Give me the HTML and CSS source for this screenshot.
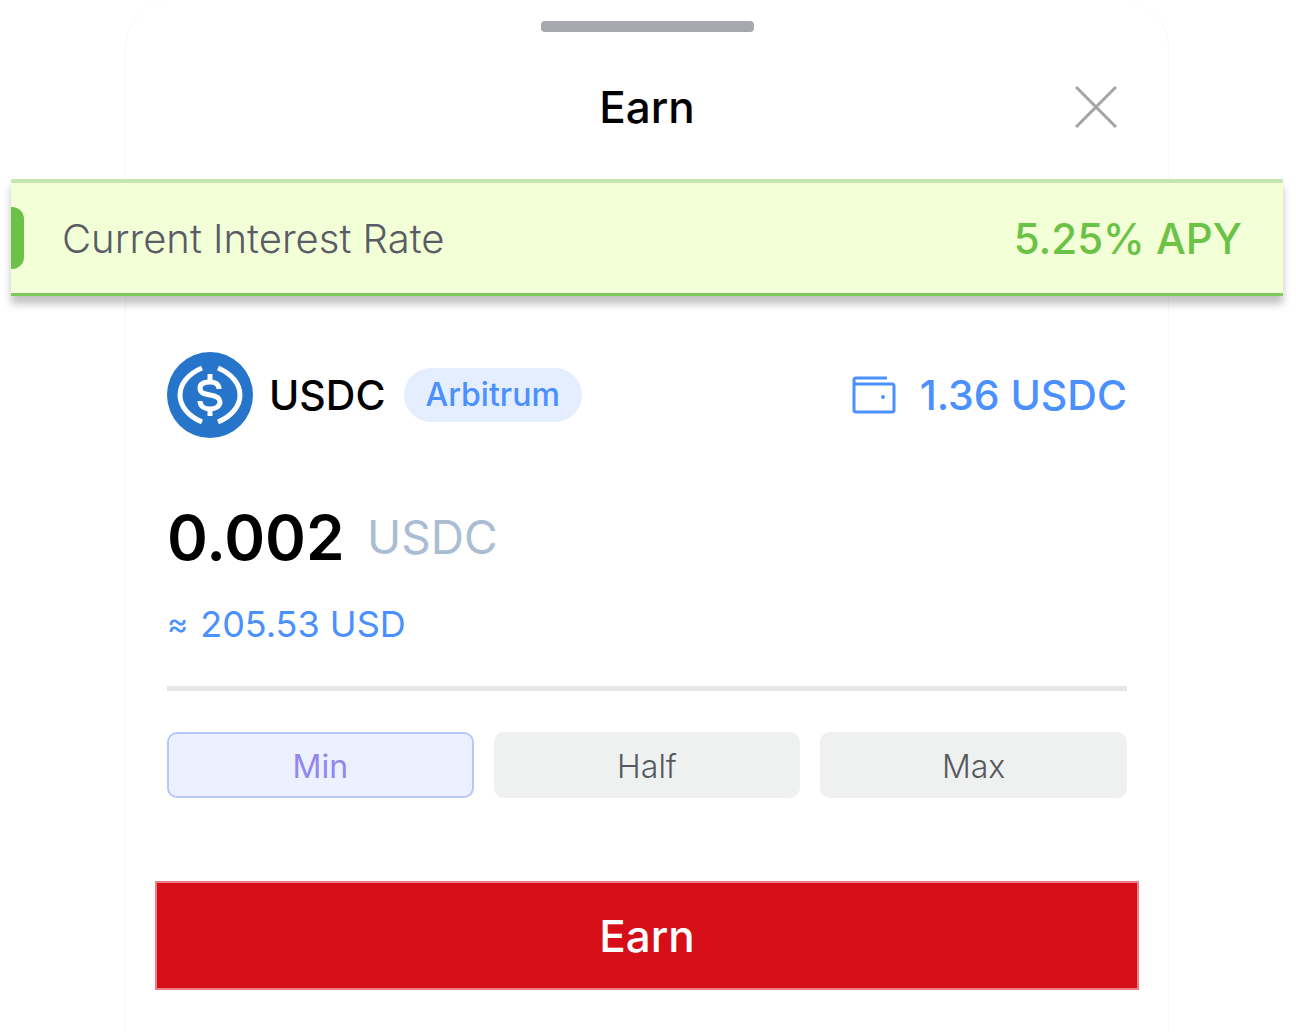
FILE: index.html
```html
<!DOCTYPE html>
<html lang="en">
<head>
    <meta charset="UTF-8">
    <meta name="viewport" content="width=device-width, initial-scale=1.0">
    <title>Earn</title>
    <link rel="stylesheet" href="styles.css">
</head>
<body>
    <main class="sheet">
        <div class="handle"></div>
        <header class="header">
            <h1>Earn</h1>
            <button type="button" class="close" aria-label="Close">
                <svg width="42" height="42" viewBox="0 0 42 42" fill="none" stroke="#a2a4a6" stroke-width="3">
                    <path d="M1 1L41 41M41 1L1 41"/>
                </svg>
            </button>
        </header>

        <section class="rate">
            <span class="rate-label">Current Interest Rate</span>
            <span class="rate-value">5.25% APY</span>
        </section>

        <div class="token">
            <svg class="coin" width="86" height="86" viewBox="0 0 86 86" fill="none">
                <circle cx="43" cy="43" r="43" fill="#2775ca"/>
                <g stroke="#fff" stroke-width="5">
                    <path d="M35 16C21 22 13 32 13 43S21 64 35 70"/>
                    <path d="M51 16C65 22 73 32 73 43S65 64 51 70"/>
                    <path d="M52 37C52 32 48 30 43 30C37 30 33 32 33 36C33 41 37 42 43 43C50 44 53 46 53 50C53 54 49 57 43 57C37 57 33 54 33 49"/>
                    <path d="M43 22V30M43 57V64"/>
                </g>
            </svg>
            <span class="token-name">USDC</span>
            <span class="network">Arbitrum</span>
            <span class="balance">
                <svg width="44" height="40" viewBox="0 0 44 40" fill="none" stroke="#4a90ff" stroke-width="3">
                    <path d="M35 3H4Q2 3 2 5V35Q2 37 4 37H40Q42 37 42 35V11Q42 9 40 9H4Q2 9 2 6"/>
                    <circle cx="31" cy="22" r="2" fill="#4a90ff" stroke="none"/>
                </svg>
                1.36 USDC
            </span>
        </div>

        <div class="amount">
            <input type="text" id="amount" inputmode="decimal" value="0.002">
            <label for="amount">USDC</label>
        </div>
        <div class="fiat"><span class="approx">≈</span>205.53 USD</div>
        <hr>
        <div class="presets">
            <button type="button" class="preset active">Min</button>
            <button type="button" class="preset">Half</button>
            <button type="button" class="preset">Max</button>
        </div>
        <button type="button" class="submit">Earn</button>
    </main>
</body>
</html>
```
FILE: styles.css
```css
* {
    box-sizing: border-box;
}
body {
    margin: 0;
    background-color: #fff;
    font-family: Inter, "Liberation Sans", sans-serif;
    color: #000;
}
button, input {
    font-family: inherit;
}
.sheet {
    min-height: 100vh;
    margin: 0 127px 0 125px;
    padding: 21px 41px 42px;
    border: 1px solid #f7f7f7;
    border-width: 0 1px;
    border-radius: 48px 48px 0 0;
}
.handle {
    width: 213px;
    height: 11px;
    margin: 0 auto;
    border-radius: 4px;
    background-color: #a5a8ac;
}
.header {
    display: grid;
    grid-template-columns: 1fr auto 1fr;
    align-items: center;
    height: 147px;
    padding: 2px 10px 0;
}
.header h1 {
    grid-column: 2;
    margin: 0;
    font-size: 44px;
    font-weight: 500;
}
.close {
    justify-self: end;
    padding: 0;
    border: none;
    background: none;
}
.close svg {
    display: block;
}

/* banner is wider than the sheet on both sides */
.rate {
    display: flex;
    justify-content: space-between;
    align-items: center;
    position: relative;
    height: 117px;
    margin: 0 -156px;
    padding: 0 41px 0 51px;
    border-top: 4px solid #c4e6b0;
    border-bottom: 3px solid #80c95f;
    background-color: #f3ffd6;
    box-shadow: 0 8px 8px rgba(0, 0, 0, .24);
}
.rate::before {
    content: "";
    position: absolute;
    left: 0;
    top: 24px;
    width: 13px;
    height: 62px;
    border-radius: 0 12px 12px 0;
    background-color: #6cc247;
}
.rate-label {
    font-size: 40px;
    font-weight: 300;
    color: #595c66;
}
.rate-value {
    font-size: 42px;
    font-weight: 500;
    color: #6cc247;
}

.token {
    display: flex;
    align-items: center;
    margin-top: 56px;
}
.token-name {
    margin-left: 16px;
    font-size: 41px;
    font-weight: 500;
}
.network {
    margin-left: 18px;
    padding: 0 22px;
    border-radius: 27px;
    background-color: #e5eeff;
    font-size: 32px;
    font-weight: 500;
    line-height: 54px;
    color: #4a90ff;
}
.balance {
    display: flex;
    align-items: center;
    gap: 24px;
    margin-left: auto;
    font-size: 41px;
    font-weight: 500;
    color: #4a90ff;
}

.amount {
    display: flex;
    align-items: center;
    margin-top: 59px;
}
.amount input {
    width: 200px;
    height: 80px;
    padding: 0;
    border: none;
    outline: none;
    font-size: 62px;
    font-weight: 600;
}
.amount label {
    font-size: 46px;
    color: #abbdd3;
}
.fiat {
    display: flex;
    align-items: center;
    gap: 12px;
    margin-top: 24px;
    font-size: 36px;
    line-height: 46px;
    color: #4a90ff;
}
.approx {
    font-size: 32px;
}
hr {
    height: 5px;
    margin: 39px 0 41px;
    border: none;
    background-color: #e5e8eb;
}
.presets {
    display: grid;
    grid-template-columns: repeat(3, 1fr);
    gap: 20px;
}
.preset {
    height: 66px;
    padding: 2px 0 0;
    border: 2px solid #eff1f1;
    border-radius: 10px;
    background-color: #eff1f1;
    font-size: 32px;
    font-weight: 300;
    color: #55585c;
}
.preset.active {
    border-color: #b9c6fb;
    background-color: #ecf1ff;
    font-weight: 400;
    color: #9187ef;
}
.submit {
    display: block;
    width: calc(100% + 24px);
    height: 109px;
    margin: 83px -12px 0;
    border: 2px solid #ef7f86;
    background-color: #d60e17;
    font-size: 44px;
    font-weight: 500;
    color: #fff;
}
```
